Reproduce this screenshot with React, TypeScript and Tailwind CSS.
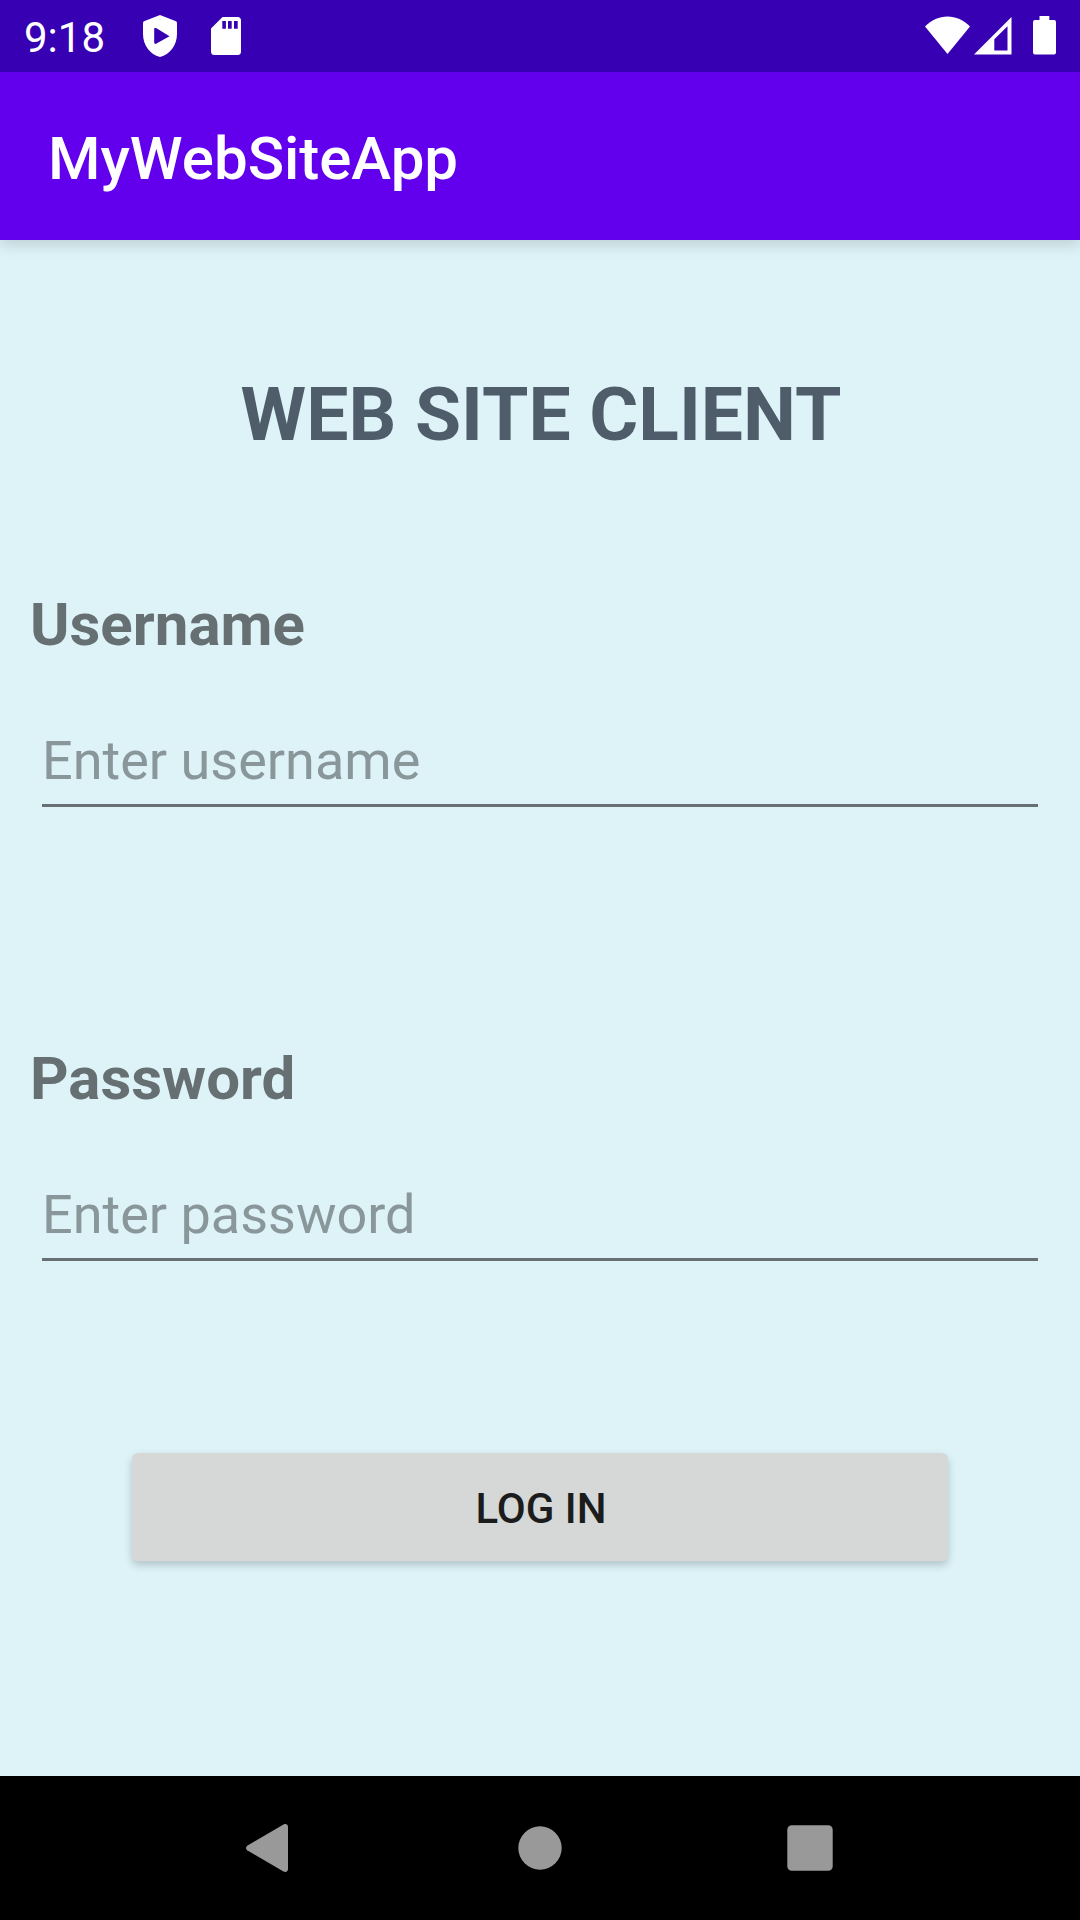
type FieldProps = { id: string; label: string; placeholder: string; type: string };

function StatusBar() {
  return (
    <div className="relative z-10 flex h-[72px] items-center justify-between bg-[#3700b3] text-white">
      <div className="flex h-full items-center pl-6">
        <span className="w-[119px] pt-1 text-[42px] leading-[50px]">9:18</span>
        <svg className="h-[42px] w-[34px]" viewBox="0 0 34 42" fill="currentColor">
          <path
            fillRule="evenodd"
            d="M17 0 33 6.3Q34 6.7 34 8V19C34 30 27 39.500 17 42 7 39.500 0 30 0 19V8Q0 6.700 1 6.300ZM11.200 14V27.500C11.200 28.800 12.400 29.300 13.500 28.600L26.500 21.200 13.500 13.300C12.400 12.600 11.200 12.800 11.200 14Z"
          />
        </svg>
        <svg className="ml-[34px] h-[38px] w-[30px]" viewBox="0 0 30 38" fill="currentColor">
          <path
            fillRule="evenodd"
            d="M11.500 0H26.500Q30 0 30 3.500V34.500Q30 38 26.500 38H3.500Q0 38 0 34.500V11.500ZM11.300 4V11.700H14.900V4ZM17 4V11.700H20.700V4ZM23 4V11.700H26.700V4Z"
          />
        </svg>
      </div>
      <div className="flex h-full items-start pt-4 pr-6">
        <svg className="h-[38px] w-[46px]" viewBox="0 0 46 38" fill="currentColor">
          <path d="M0 10.500C12.500 -3 32.500 -3 45 10.500L22.500 38Z" />
        </svg>
        <svg className="mt-px ml-[3px] h-[38px] w-[38px]" viewBox="0 0 38 38" fill="currentColor">
          <path fillRule="evenodd" d="M0 37.500 37.500 0V37.500ZM20.300 22.300V33.500H33.500V9.300Z" />
        </svg>
        <svg className="ml-[21px] h-[39px] w-[23px]" viewBox="0 0 23 39" fill="currentColor">
          <path d="M6.500 0H16.300V4H21Q23 4 23 6V36.500Q23 38.500 21 38.500H2Q0 38.500 0 36.500V6Q0 4 2 4H6.500Z" />
        </svg>
      </div>
    </div>
  );
}

function Field({ id, label, placeholder, type }: FieldProps) {
  return (
    <div className="flex flex-col">
      <label htmlFor={id} className="ml-[30px] text-[60px] leading-[70px] font-bold text-[#666f71]">
        {label}
      </label>
      <input
        id={id}
        type={type}
        placeholder={placeholder}
        className="mx-[42px] mt-[68px] h-[79px] rounded-none border-b-[3px] border-[#666f71] bg-transparent pb-3 text-[54px] leading-[64px] text-[#1c1e1f] outline-none placeholder:text-[#89979a] placeholder:opacity-100"
      />
    </div>
  );
}

function NavigationBar() {
  return (
    <nav className="flex h-36 items-center justify-center gap-[222px] bg-black text-[#999999]">
      <svg className="h-12 w-12" viewBox="0 0 48 48" fill="currentColor">
        <path d="M1.200 21.700 37.500 .5C40 -.6 42 .6 42 3V45C42 47.400 40 48.600 37.500 47.500L1.200 26.300Q-1.200 24 1.200 21.700Z" />
      </svg>
      <svg className="h-12 w-12" viewBox="0 0 48 48" fill="currentColor">
        <circle cx="24" cy="24" r="21.7" />
      </svg>
      <svg className="h-12 w-12" viewBox="0 0 48 48" fill="currentColor">
        <rect x="1.300" y="1.300" width="45.400" height="45.400" rx="4.500" />
      </svg>
    </nav>
  );
}

export default function App() {
  return (
    <div className="flex h-[1920px] w-[1080px] flex-col overflow-hidden bg-[#ddf3f8] font-[Roboto,sans-serif]">
      <StatusBar />
      <header className="flex h-[168px] items-center bg-[#6200ee] pt-[5px] pl-12 shadow-[0_5px_14px_rgba(0,0,0,0.14)]">
        <h1 className="text-[60px] leading-[70px] font-medium text-white">MyWebSiteApp</h1>
      </header>
      <main className="flex flex-1 flex-col pt-[130px]">
        <h2 className="pl-0.5 text-center text-[75px] leading-[88px] font-bold text-[#4f5d6b]">WEB SITE CLIENT</h2>
        <div className="mt-[132px] flex flex-col gap-[237px]">
          <Field id="username" label="Username" placeholder="Enter username" type="text" />
          <Field id="password" label="Password" placeholder="Enter password" type="password" />
        </div>
        <button className="mx-[132px] mt-[192px] h-[108px] rounded-[6px] bg-[#d6d8d7] pt-[3px] pl-0.5 text-[42px] font-medium text-[#1c1c1c] shadow-[0_4px_8px_rgba(0,0,0,0.2)]">
          LOG IN
        </button>
      </main>
      <NavigationBar />
    </div>
  );
}
